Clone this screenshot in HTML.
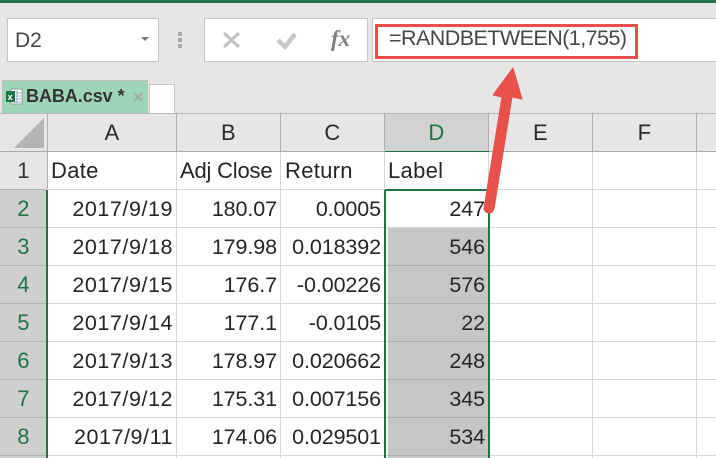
<!DOCTYPE html>
<html><head><meta charset="utf-8">
<style>
html,body{margin:0;padding:0}
body{width:716px;height:458px;overflow:hidden;position:relative;background:#e6e6e6;font-family:"Liberation Sans",sans-serif;color:#262626}
.a{position:absolute}
.t{position:absolute;font-size:22px;line-height:38px;height:38px;white-space:nowrap;letter-spacing:.3px}
.n{font-size:21.5px;letter-spacing:-.1px}
.d{font-size:21.5px;letter-spacing:.55px}
.r{text-align:right}
.h{text-align:center;color:#2a2a2a}
.g{color:#217346}
</style></head><body>
<div class="a" style="left:0;top:0;width:716px;height:3px;background:#217346"></div>

<div class="a" style="left:7px;top:18px;width:150px;height:42px;background:#fff;border:1px solid #c6c6c6"></div>
<div class="t" style="left:15px;top:22px;font-size:21px;letter-spacing:0;color:#484848">D2</div>
<div class="a" style="left:141px;top:37px;width:0;height:0;border-left:4px solid transparent;border-right:4px solid transparent;border-top:4px solid #777"></div>
<div class="a" style="left:178px;top:32px;width:4px;height:4px;background:#aaa"></div>
<div class="a" style="left:178px;top:38px;width:4px;height:4px;background:#aaa"></div>
<div class="a" style="left:178px;top:44px;width:4px;height:4px;background:#aaa"></div>

<div class="a" style="left:204px;top:18px;width:162px;height:42px;background:#fff;border:1px solid #c6c6c6"></div>
<svg class="a" style="left:200px;top:15px" width="180" height="50">
<path d="M24 18 L39 32 M39 18 L24 32" stroke="#c4c4c4" stroke-width="3" fill="none"/>
<path d="M78 25 L85 32 L95 19" stroke="#c8c8c8" stroke-width="4.5" fill="none"/>
</svg>
<div class="a" style="left:331px;top:22px;font:italic bold 23px 'Liberation Serif',serif;color:#808080;line-height:34px">fx</div>

<div class="a" style="left:372px;top:18px;width:344px;height:42px;background:#fff;border:1px solid #c6c6c6;border-right:0"></div>
<div class="a" style="left:375px;top:24px;width:257px;height:29px;border:3px solid #e8504c"></div>
<div class="t" style="left:389px;top:19px;font-size:21.5px;color:#484848;letter-spacing:-.55px">=RANDBETWEEN(1,755)</div>

<div class="a" style="left:2px;top:80px;width:146px;height:34px;background:#9fd5b7;border:1px solid #c0c0c0;border-bottom:0;box-sizing:border-box"></div>
<svg class="a" style="left:5px;top:88px" width="18" height="17">
<rect x="6" y="1" width="11" height="15" fill="#fff" stroke="#999" stroke-width="1"/>
<path d="M8 5h8M8 8h8M8 11h8M8 14h8M12 2v13" stroke="#9ab" stroke-width="1"/>
<rect x="1" y="3" width="9" height="11" fill="#217346"/>
<text x="2.6" y="12" font-size="9" font-weight="bold" fill="#fff" font-family="Liberation Sans">x</text>
</svg>
<div class="a" style="left:26px;top:80px;font-size:18px;font-weight:bold;line-height:32px;color:#333;white-space:nowrap;letter-spacing:-.05px">BABA.csv *</div>
<svg class="a" style="left:132px;top:91px" width="14" height="12"><path d="M2 2L10 10M10 2L2 10" stroke="#aaa" stroke-width="2.2"/></svg>
<div class="a" style="left:149px;top:84px;width:26px;height:30px;background:#fff;border:1px solid #c6c6c6;border-bottom:0;box-sizing:border-box"></div>

<!-- grid -->
<div class="a" style="left:0;top:114px;width:716px;height:344px;background:#fff"></div>
<div class="a" style="left:0;top:114px;width:716px;height:38px;background:#e6e6e6"></div>
<div class="a" style="left:0;top:114px;width:47px;height:344px;background:#e6e6e6"></div>
<div class="a" style="left:0;top:190px;width:47px;height:268px;background:#cfcfcf"></div>
<div class="a" style="left:385px;top:114px;width:103px;height:37px;background:#d2d2d2"></div>
<div class="a" style="left:388px;top:228px;width:100px;height:230px;background:#c6c6c6"></div>

<svg class="a" style="left:0;top:113px" width="716" height="345" shape-rendering="crispEdges">
<path d="M14 35 L44 5 L44 35 Z" fill="#b4b4b4" shape-rendering="auto"/>
<path d="M0 .5H716" stroke="#b8b8b8"/>
<path d="M0 38.5H716" stroke="#ababab"/>
<path d="M47.5 0V38M176.5 0V38M280.5 0V38M384.5 0V38M488.5 0V38M592.5 0V38M696.5 0V38" stroke="#b0b0b0"/>
<path d="M176.5 39V345M280.5 39V345M384.5 39V345M592.5 39V345M696.5 39V345M488.5 39V345" stroke="#d6d6d6"/>
<path d="M48 76.5H716M48 114.5H716M48 152.5H716M48 190.5H716M48 228.5H716M48 266.5H716M48 304.5H716M48 342.5H716" stroke="#d6d6d6"/>
<path d="M388 152.5H488M388 190.5H488M388 228.5H488M388 266.5H488M388 304.5H488M388 342.5H488" stroke="#aeaeae"/>
<path d="M0 76.5H47M0 114.5H47M0 152.5H47M0 190.5H47M0 228.5H47M0 266.5H47M0 304.5H47M0 342.5H47" stroke="#b4b4b4"/>
<path d="M47.5 39V76" stroke="#b0b0b0"/>
<path d="M385 38.5H489" stroke="#217346" stroke-width="1"/>
<path d="M47 77V345" stroke="#217346" stroke-width="2"/>
<path d="M385 77V345M489 77V345M385 77H489" stroke="#217346" stroke-width="2" fill="none"/>
</svg>

<div class="t h" style="left:48px;top:114px;width:128px">A</div>
<div class="t h" style="left:177px;top:114px;width:103px">B</div>
<div class="t h" style="left:281px;top:114px;width:103px">C</div>
<div class="t h g" style="left:385px;top:114px;width:103px">D</div>
<div class="t h" style="left:489px;top:114px;width:103px">E</div>
<div class="t h" style="left:593px;top:114px;width:103px">F</div>

<div class="t h" style="left:0;top:152px;width:47px;color:#333">1</div>
<div class="t h g" style="left:0;top:190px;width:47px">2</div>
<div class="t h g" style="left:0;top:228px;width:47px">3</div>
<div class="t h g" style="left:0;top:266px;width:47px">4</div>
<div class="t h g" style="left:0;top:304px;width:47px">5</div>
<div class="t h g" style="left:0;top:342px;width:47px">6</div>
<div class="t h g" style="left:0;top:380px;width:47px">7</div>
<div class="t h g" style="left:0;top:418px;width:47px">8</div>

<div class="t" style="left:51px;top:152px">Date</div>
<div class="t" style="left:180px;top:152px;letter-spacing:-.2px">Adj Close</div>
<div class="t" style="left:285px;top:152px">Return</div>
<div class="t" style="left:388px;top:152px">Label</div>

<div class="t r d" style="left:48px;top:190px;width:125px">2017/9/19</div>
<div class="t r d" style="left:48px;top:228px;width:125px">2017/9/18</div>
<div class="t r d" style="left:48px;top:266px;width:125px">2017/9/15</div>
<div class="t r d" style="left:48px;top:304px;width:125px">2017/9/14</div>
<div class="t r d" style="left:48px;top:342px;width:125px">2017/9/13</div>
<div class="t r d" style="left:48px;top:380px;width:125px">2017/9/12</div>
<div class="t r d" style="left:48px;top:418px;width:125px">2017/9/11</div>

<div class="t r n" style="left:177px;top:190px;width:100px">180.07</div>
<div class="t r n" style="left:177px;top:228px;width:100px">179.98</div>
<div class="t r n" style="left:177px;top:266px;width:100px">176.7</div>
<div class="t r n" style="left:177px;top:304px;width:100px">177.1</div>
<div class="t r n" style="left:177px;top:342px;width:100px">178.97</div>
<div class="t r n" style="left:177px;top:380px;width:100px">175.31</div>
<div class="t r n" style="left:177px;top:418px;width:100px">174.06</div>

<div class="t r n" style="left:281px;top:190px;width:100px">0.0005</div>
<div class="t r n" style="left:281px;top:228px;width:100px">0.018392</div>
<div class="t r n" style="left:281px;top:266px;width:100px">-0.00226</div>
<div class="t r n" style="left:281px;top:304px;width:100px">-0.0105</div>
<div class="t r n" style="left:281px;top:342px;width:100px">0.020662</div>
<div class="t r n" style="left:281px;top:380px;width:100px">0.007156</div>
<div class="t r n" style="left:281px;top:418px;width:100px">0.029501</div>

<div class="t r n" style="left:385px;top:190px;width:100px">247</div>
<div class="t r n" style="left:385px;top:228px;width:100px">546</div>
<div class="t r n" style="left:385px;top:266px;width:100px">576</div>
<div class="t r n" style="left:385px;top:304px;width:100px">22</div>
<div class="t r n" style="left:385px;top:342px;width:100px">248</div>
<div class="t r n" style="left:385px;top:380px;width:100px">345</div>
<div class="t r n" style="left:385px;top:418px;width:100px">534</div>

<svg class="a" style="left:0;top:0" width="716" height="458">
<path d="M513 68 L522 99 L512 97 L494 209 Q492 214 488 213 Q484 212 484 208 L502 97 L493 95 Z" fill="#e8504c" stroke="#e8504c" stroke-width="1" stroke-linejoin="round"/>
</svg>
</body></html>
